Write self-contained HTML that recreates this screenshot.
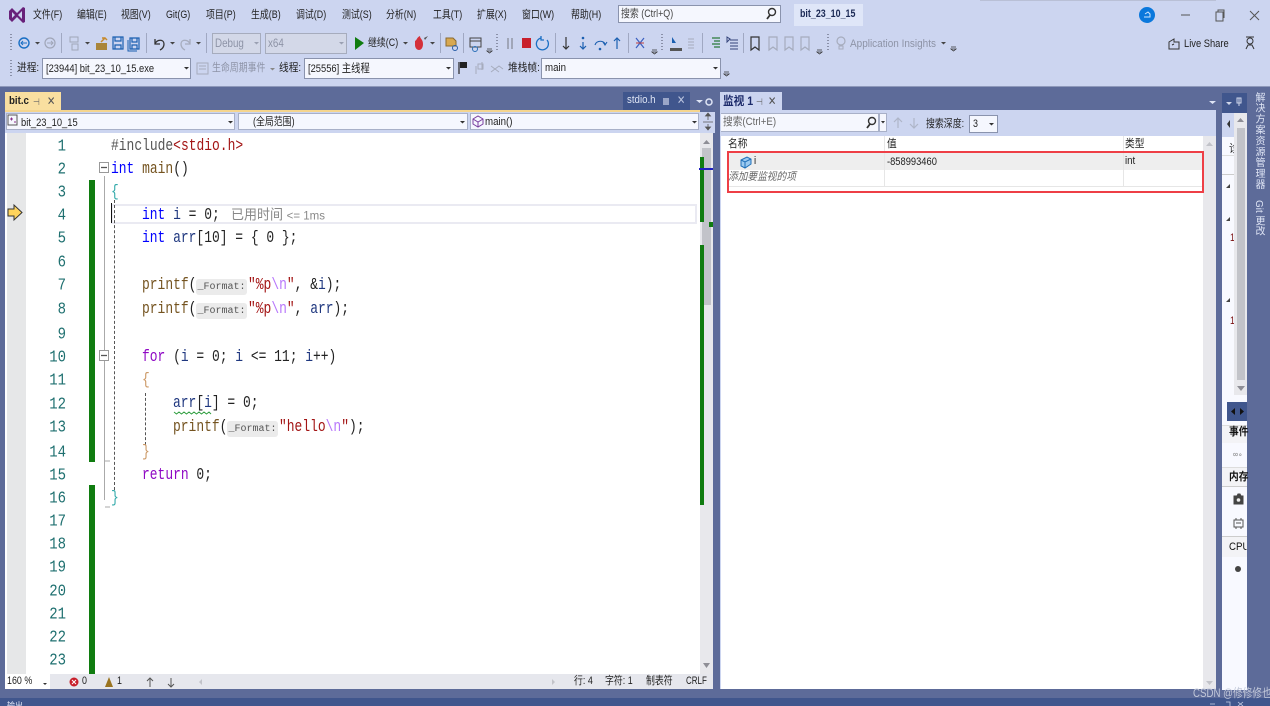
<!DOCTYPE html>
<html><head><meta charset="utf-8">
<style>
html,body{margin:0;padding:0;width:1270px;height:706px;overflow:hidden;background:#ccd5f0}
body{position:relative;font-family:"Liberation Sans","Noto Sans CJK SC",sans-serif;font-size:10px;color:#222}
#w{position:absolute;left:0;top:0;width:1270px;height:706px;filter:blur(.35px)}
.b,.t,.c,.n{position:absolute}
.t{white-space:nowrap;line-height:14px;transform:scale(.89,1.08);transform-origin:0 50%}
.w{transform:scale(.97,1.08)}
.c{white-space:pre;font-family:"Liberation Mono","Noto Serif CJK SC",monospace;font-size:16.2px;line-height:20px;height:20px;transform:scaleX(.8);transform-origin:0 0;color:#222}
.n{left:31px;width:35px;text-align:right;font-family:"Liberation Mono",monospace;font-size:14px;line-height:20px;color:#1f7070;transform:scaleY(1.2);transform-origin:50% 50%}
.k{color:#0000ff}.f{color:#74531f}.v{color:#1f377f}.s{color:#a31515}.e{color:#b776fb}.p{color:#8f08c4}
.h{position:absolute;background:#ebebeb;border-radius:3px;height:16px;font-family:"Liberation Mono",monospace;font-size:10px;line-height:18px;color:#555;text-align:center}
.cb{position:absolute;background:#f5f7fe;border:1px solid #8a93ad;box-sizing:border-box;height:21px}
.g{color:#8d93a6}
svg{position:absolute;left:0;top:0}
</style></head><body><div id="w">

<!-- chrome panels -->
<div class="b" style="left:980px;top:0;width:236px;height:1px;background:#b9c0d6"></div>
<div class="b" style="left:0;top:86px;width:1270px;height:620px;background:#5d6b99"></div>
<div class="b" style="left:0;top:86px;width:1270px;height:1px;background:#8e99bb"></div>
<div class="b" style="left:0;top:698px;width:1270px;height:8px;background:#40568d"></div>

<!-- menu -->
<span class="t" style="left:33px;top:9px">文件(F)</span>
<span class="t" style="left:77px;top:9px">编辑(E)</span>
<span class="t" style="left:121px;top:9px">视图(V)</span>
<span class="t" style="left:166px;top:9px">Git(G)</span>
<span class="t" style="left:206px;top:9px">项目(P)</span>
<span class="t" style="left:251px;top:9px">生成(B)</span>
<span class="t" style="left:296px;top:9px">调试(D)</span>
<span class="t" style="left:342px;top:9px">测试(S)</span>
<span class="t" style="left:386px;top:9px">分析(N)</span>
<span class="t" style="left:433px;top:9px">工具(T)</span>
<span class="t" style="left:477px;top:9px">扩展(X)</span>
<span class="t" style="left:522px;top:9px">窗口(W)</span>
<span class="t" style="left:571px;top:9px">帮助(H)</span>

<div class="b" style="left:618px;top:5px;width:163px;height:18px;background:#f5f7fe;border:1px solid #8a93ad;box-sizing:border-box"></div>
<span class="t" style="left:621px;top:8px;color:#444">搜索 (Ctrl+Q)</span>
<div class="b" style="left:794px;top:4px;width:69px;height:22px;background:#dfe6f8"></div>
<span class="t" style="left:800px;top:8px;color:#1c2a55;font-weight:bold;font-size:10px">bit_23_10_15</span>

<!-- toolbar 2 -->
<div class="cb" style="left:212px;top:33px;width:49px;background:#d3d8e8;border-color:#a6acbd"></div>
<span class="t g" style="left:215px;top:37px;font-size:11px">Debug</span>
<div class="cb" style="left:265px;top:33px;width:82px;background:#d3d8e8;border-color:#a6acbd"></div>
<span class="t g" style="left:268px;top:37px;font-size:11px">x64</span>
<span class="t" style="left:368px;top:37px">继续(C)</span>
<span class="t g" style="left:850px;top:37px;font-size:10.500px;transform:scale(.95,1.08)">Application Insights</span>
<span class="t" style="left:1184px;top:37px;font-size:10.500px">Live Share</span>

<!-- toolbar 3 -->
<span class="t w" style="left:17px;top:62px">进程:</span>
<div class="cb" style="left:42px;top:58px;width:149px"></div>
<span class="t" style="left:46px;top:62px;font-size:10.500px">[23944] bit_23_10_15.exe</span>
<span class="t g" style="left:212px;top:62px">生命周期事件</span>
<span class="t w" style="left:279px;top:62px">线程:</span>
<div class="cb" style="left:304px;top:58px;width:150px"></div>
<span class="t" style="left:308px;top:62px;font-size:10.500px">[25556] 主线程</span>
<span class="t w" style="left:508px;top:62px">堆栈帧:</span>
<div class="cb" style="left:541px;top:58px;width:180px"></div>
<span class="t w" style="left:545px;top:62px">main</span>

<!-- editor tabs -->
<div class="b" style="left:5px;top:92px;width:56px;height:18px;background:#f9dfa0"></div>
<div class="b" style="left:5px;top:110px;width:695px;height:2px;background:#f5d58e"></div>
<span class="t w" style="left:9px;top:95px;font-weight:bold;font-size:10px;color:#222">bit.c</span>
<span class="t" style="left:33px;top:95px;color:#666;font-size:9px">⊣</span>
<span class="t" style="left:47px;top:95px;color:#555;font-size:11px">✕</span>
<div class="b" style="left:623px;top:92px;width:67px;height:18px;background:#40568d"></div>
<span class="t w" style="left:627px;top:94px;color:#dfe5f5">stdio.h</span>
<span class="t" style="left:677px;top:94px;color:#b9c3de;font-size:11px">✕</span>

<!-- editor nav bar -->
<div class="b" style="left:5px;top:112px;width:710px;height:21px;background:#ccd5f0"></div>
<div class="b" style="left:6px;top:113px;width:229px;height:17px;background:#f5f7fe;border:1px solid #a8b0c8;box-sizing:border-box"></div>
<div class="b" style="left:238px;top:113px;width:230px;height:17px;background:#f5f7fe;border:1px solid #a8b0c8;box-sizing:border-box"></div>
<div class="b" style="left:470px;top:113px;width:229px;height:17px;background:#f5f7fe;border:1px solid #a8b0c8;box-sizing:border-box"></div>
<span class="t" style="left:21px;top:116px;font-size:10.500px">bit_23_10_15</span>
<span class="t" style="left:253px;top:116px">(全局范围)</span>
<span class="t w" style="left:485px;top:116px">main()</span>

<!-- editor -->
<div class="b" style="left:5px;top:133px;width:695px;height:541px;background:#fff"></div>
<div class="b" style="left:7px;top:133px;width:19px;height:541px;background:#e6e7e8"></div>
<div class="b" style="left:89px;top:180px;width:6px;height:282px;background:#107c10"></div>
<div class="b" style="left:89px;top:485px;width:6px;height:189px;background:#107c10"></div>
<div class="b" style="left:104px;top:176px;width:1px;height:324px;background:#aaa"></div>
<div class="b" style="left:111px;top:204px;width:586px;height:20px;border:2px solid #eaeaf2;box-sizing:border-box"></div>
<div class="b" style="left:111px;top:203px;width:1px;height:20px;background:#111"></div>
<div class="b" style="left:114px;top:200px;height:290px;border-left:1px dashed #555"></div>
<div class="b" style="left:145px;top:393px;height:52px;border-left:1px dashed #555"></div>

<div class="n" style="top:137px">1</div><div class="n" style="top:160px">2</div><div class="n" style="top:183px">3</div><div class="n" style="top:206px">4</div><div class="n" style="top:229px">5</div><div class="n" style="top:253px">6</div><div class="n" style="top:276px">7</div><div class="n" style="top:300px">8</div><div class="n" style="top:325px">9</div><div class="n" style="top:348px">10</div><div class="n" style="top:371px">11</div><div class="n" style="top:395px">12</div><div class="n" style="top:418px">13</div><div class="n" style="top:443px">14</div><div class="n" style="top:466px">15</div><div class="n" style="top:489px">16</div><div class="n" style="top:512px">17</div><div class="n" style="top:535px">18</div><div class="n" style="top:558px">19</div><div class="n" style="top:582px">20</div><div class="n" style="top:605px">21</div><div class="n" style="top:628px">22</div><div class="n" style="top:651px">23</div>

<div class="c" style="left:111px;top:136px"><span style="color:#555">#include</span><span class="s">&lt;stdio.h&gt;</span></div>
<div class="c" style="left:111px;top:159px"><span class="k">int</span> <span class="f">main</span>()</div>
<div class="c" style="left:111px;top:182px;color:#3aa">{</div>
<div class="c" style="left:142px;top:205px"><span class="k">int</span> <span class="v">i</span> = 0;</div>
<span class="t" style="left:231px;top:208px;color:#888;font-size:13px;transform:scale(1,1.08)">已用时间 <span style="font-size:11.500px">&lt;= 1ms</span></span>
<div class="c" style="left:142px;top:228px"><span class="k">int</span> <span class="v">arr</span>[10] = { 0 };</div>

<div class="c" style="left:142px;top:275px"><span class="f">printf</span>(</div>
<div class="h" style="left:196px;top:279px;width:51px">_Format:</div>
<div class="c" style="left:248px;top:275px"><span class="s">"%p</span><span class="e">\n</span><span class="s">"</span>, &amp;<span class="v">i</span>);</div>
<div class="c" style="left:142px;top:299px"><span class="f">printf</span>(</div>
<div class="h" style="left:196px;top:303px;width:51px">_Format:</div>
<div class="c" style="left:248px;top:299px"><span class="s">"%p</span><span class="e">\n</span><span class="s">"</span>, <span class="v">arr</span>);</div>

<div class="c" style="left:142px;top:347px"><span class="p">for</span> (<span class="v">i</span> = 0; <span class="v">i</span> &lt;= 11; <span class="v">i</span>++)</div>
<div class="c" style="left:142px;top:370px;color:#c96">{</div>
<div class="c" style="left:173px;top:393px"><span class="v">arr</span>[<span class="v">i</span>] = 0;</div>
<div class="c" style="left:173px;top:417px"><span class="f">printf</span>(</div>
<div class="h" style="left:227px;top:421px;width:51px">_Format:</div>
<div class="c" style="left:279px;top:417px"><span class="s">"hello</span><span class="e">\n</span><span class="s">"</span>);</div>
<div class="c" style="left:142px;top:442px;color:#c96">}</div>
<div class="c" style="left:142px;top:465px"><span class="p">return</span> 0;</div>
<div class="c" style="left:111px;top:488px;color:#3aa">}</div>

<!-- editor scrollbar -->
<div class="b" style="left:700px;top:133px;width:13px;height:541px;background:#e8e8ec"></div>
<div class="b" style="left:702px;top:148px;width:9px;height:157px;background:#c2c3c9"></div>
<div class="b" style="left:700px;top:157px;width:4px;height:65px;background:#107c10"></div>
<div class="b" style="left:700px;top:245px;width:4px;height:260px;background:#107c10"></div>
<div class="b" style="left:709px;top:222px;width:4px;height:5px;background:#107c10"></div>
<div class="b" style="left:699px;top:168px;width:14px;height:2px;background:#2020c0"></div>

<!-- status -->
<div class="b" style="left:5px;top:674px;width:708px;height:15px;background:#e6e7ed"></div>
<div class="b" style="left:5px;top:674px;width:45px;height:15px;background:#fff"></div>
<span class="t" style="left:7px;top:675px">160 %</span>
<span class="t" style="left:82px;top:675px">0</span>
<span class="t" style="left:117px;top:675px">1</span>
<span class="t" style="left:574px;top:675px">行: 4</span>
<span class="t" style="left:605px;top:675px">字符: 1</span>
<span class="t" style="left:646px;top:675px">制表符</span>
<span class="t" style="left:686px;top:675px;transform:scale(.8,1.08)">CRLF</span>
<span class="t" style="left:7px;top:699px;color:#dfe5f5;font-size:9px;height:7px;overflow:hidden">输出</span>

<!-- watch panel -->
<div class="b" style="left:720px;top:92px;width:62px;height:18px;background:#ccd5f0"></div>
<span class="t w" style="left:723px;top:95px;font-weight:bold;color:#1c2a6a;font-size:11px">监视 1</span>
<span class="t" style="left:756px;top:95px;color:#666;font-size:9px">⊣</span>
<span class="t" style="left:768px;top:95px;color:#555;font-size:11px">✕</span>
<div class="b" style="left:720px;top:110px;width:496px;height:26px;background:#ccd5f0"></div>
<div class="b" style="left:720px;top:113px;width:159px;height:19px;background:#f5f7fe;border:1px solid #a8b0c8;box-sizing:border-box"></div>
<div class="b" style="left:879px;top:113px;width:8px;height:19px;background:#f5f7fe;border:1px solid #a8b0c8;box-sizing:border-box"></div>
<span class="t w" style="left:723px;top:116px;color:#666">搜索(Ctrl+E)</span>
<span class="t" style="left:926px;top:118px">搜索深度:</span>
<div class="b" style="left:969px;top:115px;width:29px;height:18px;background:#f5f7fe;border:1px solid #8a93ad;box-sizing:border-box"></div>
<span class="t" style="left:973px;top:118px">3</span>

<div class="b" style="left:720px;top:136px;width:483px;height:553px;background:#fff"></div>
<div class="b" style="left:1203px;top:136px;width:13px;height:553px;background:#e8e8ec"></div>
<div class="b" style="left:720px;top:110px;width:1px;height:579px;background:#ccd5f0"></div>
<div class="b" style="left:727px;top:153px;width:476px;height:17px;background:#eeeeee"></div>
<div class="b" style="left:727px;top:186px;width:476px;height:1px;background:#e6e6e6"></div>
<div class="b" style="left:884px;top:136px;width:1px;height:50px;background:#e6e6e6"></div>
<div class="b" style="left:1123px;top:136px;width:1px;height:50px;background:#e6e6e6"></div>
<span class="t w" style="left:728px;top:138px">名称</span>
<span class="t w" style="left:887px;top:138px">值</span>
<span class="t w" style="left:1125px;top:138px">类型</span>
<span class="t w" style="left:754px;top:155px">i</span>
<span class="t" style="left:887px;top:155px;font-size:10.500px">-858993460</span>
<span class="t w" style="left:1125px;top:155px">int</span>
<span class="t w" style="left:728px;top:171px;font-style:italic;color:#666">添加要监视的项</span>
<div class="b" style="left:727px;top:151px;width:477px;height:42px;border:2px solid #ee3f46;box-sizing:border-box"></div>

<!-- right side panel -->
<div class="b" style="left:1222px;top:93px;width:25px;height:597px;background:#f8f9ff"></div>
<div class="b" style="left:1222px;top:93px;width:25px;height:20px;background:#40568d"></div>
<div class="b" style="left:1222px;top:113px;width:25px;height:24px;background:#ccd5f0"></div>
<div class="b" style="left:1222px;top:155px;width:12px;height:1px;background:#ddd"></div>
<div class="b" style="left:1222px;top:174px;width:12px;height:1px;background:#ccc"></div>
<span class="t w" style="left:1229px;top:143px;color:#222;width:5px;overflow:hidden">诊</span>
<span class="t" style="left:1230px;top:232px;color:#7a1010">1</span>
<span class="t" style="left:1230px;top:315px;color:#7a1010">1</span>
<div class="b" style="left:1234px;top:113px;width:13px;height:282px;background:#e8e8ec"></div>
<div class="b" style="left:1237px;top:128px;width:8px;height:252px;background:#c2c3c9"></div>
<div class="b" style="left:1227px;top:402px;width:20px;height:19px;background:#40568d"></div>
<div class="b" style="left:1222px;top:425px;width:25px;height:17px;background:#f3f3f6;border-top:1px solid #ddd"></div>
<span class="t w" style="left:1229px;top:426px;color:#111;font-weight:bold">事件</span>
<span class="t" style="left:1233px;top:448px;color:#777;font-size:8px">∞∘</span>
<div class="b" style="left:1222px;top:467px;width:25px;height:20px;background:#f3f3f6;border-top:1px solid #ddd;border-bottom:1px solid #ccc;box-sizing:border-box"></div>
<span class="t w" style="left:1229px;top:471px;font-weight:bold;color:#111">内存</span>
<div class="b" style="left:1222px;top:536px;width:25px;height:21px;background:#f3f3f6;border-top:1px solid #ccc;box-sizing:border-box"></div>
<span class="t w" style="left:1229px;top:541px;color:#111;width:18px;overflow:hidden">CPU</span>

<!-- vertical tabs -->
<div class="t" style="left:1252px;top:92px;writing-mode:vertical-rl;color:#dfe5f5;line-height:12px;letter-spacing:.9px;transform:none">解决方案资源管理器</div>
<div class="t" style="left:1252px;top:200px;writing-mode:vertical-rl;color:#dfe5f5;line-height:12px;transform:none">Git 更改</div>

<!-- watermark -->
<span class="t" style="left:1193px;top:687px;color:#c3c9da;font-size:11px;transform:scale(.88,1.08)">CSDN @修修修也</span>

<svg width="1270" height="706" viewBox="0 0 1270 706" fill="none">
 <!-- VS logo -->
 <path d="M9 11l3-3 5 5 6-6 2 1v14l-2 1-6-6-5 5-3-3zM12 12v6l3-3zM22 11l-4 4 4 4z" fill="#68217a" fill-rule="evenodd"/>
 <!-- search icons -->
 <circle cx="772" cy="12" r="3.500" stroke="#333" stroke-width="1.400"/><path d="M770 15l-3 4" stroke="#333" stroke-width="1.800"/>
 <circle cx="872" cy="121" r="3.500" stroke="#333" stroke-width="1.400"/><path d="M870 124l-3 4" stroke="#333" stroke-width="1.800"/>
 <!-- account + window -->
 <circle cx="1147" cy="15" r="8" fill="#0a78dc"/><path d="M1144 17h6v-3l-2-2-3 2" stroke="#cfe6ff"/>
 <path d="M1181 15h9" stroke="#555"/>
 <path d="M1216 12h7v9h-7zM1218 12v-2h6v8" stroke="#555"/>
 <path d="M1250 11l9 9M1259 11l-9 9" stroke="#555"/>
 <!-- grips -->
 <g stroke="#8a90a8" stroke-dasharray="1 2" stroke-width="2">
  <path d="M11 34v18M11 60v18M497 34v18M662 34v18M828 34v18"/>
 </g>
 <!-- separators -->
 <path d="M61.500 33v20M146.500 33v20M206.500 33v20M440.500 33v20M463.500 33v20M555.500 33v20M628.500 33v20M702.500 33v20M743.500 33v20" stroke="#a0a8c2"/>
 <!-- toolbar icons -->
 <circle cx="24" cy="43" r="5" stroke="#1a6fc4" stroke-width="1.400"/><path d="M27 43h-6M23 41l-2 2 2 2" stroke="#1a6fc4"/>
 <circle cx="50" cy="43" r="5" stroke="#a0a6b8" stroke-width="1.200"/><path d="M47 43h6M51 41l2 2-2 2" stroke="#a0a6b8"/>
 <path d="M70 37h8v5h-8zM72 44h6v6h-6z" stroke="#a0a6b8"/>
 <path d="M96 43h11v7H96z" fill="#a9853a"/><path d="M101 42l4-4 2 2M105 38h-3" stroke="#c78a2c" stroke-width="1.500"/>
 <path d="M113 37h10v12h-10zM115 37v4h6v-4M115 49v-4h6v4" stroke="#1a5fb0" stroke-width="1.200"/>
 <path d="M130 38h9v11h-9zM132 38v4h5v-4M132 49v-4h5v4" stroke="#1a5fb0" stroke-width="1.200"/><path d="M128 40v11h9" stroke="#1a5fb0"/>
 <path d="M155 39v5h5M155 44c2-5 9-5 9 0 0 3-2 5-4 6" stroke="#333" stroke-width="1.300"/>
 <path d="M190 39v5h-5M190 44c-2-5-9-5-9 0 0 3 2 5 4 6" stroke="#a6acbd" stroke-width="1.300"/>
 <path d="M35 42h5l-2.500 2.500zM85 42h5l-2.500 2.500zM170 42h5l-2.500 2.500zM196 42h5l-2.500 2.500zM403 42h5l-2.500 2.500zM430 42h5l-2.500 2.500zM941 42h5l-2.500 2.500z" fill="#444"/>
 <path d="M254 42h5l-2.500 2.500zM339 42h5l-2.500 2.500z" fill="#9aa0b2"/>
 <path d="M355 37l9 6-9 7z" fill="#107c10"/>
 <path d="M415 41c2-1 2-4 5-5 0 3 3 3 3 8 0 4-2 6-4 6s-4-2-4-5z" fill="#d4303a"/><path d="M424 38l4-2-3 4z" fill="#555"/>
 <path d="M446 38h7l3 3v5h-10z" fill="#d8a850" stroke="#8a6a30"/><circle cx="455" cy="48" r="2.500" stroke="#2a5fa8"/>
 <path d="M470 38h11v9h-11zM470 41h11" stroke="#444"/><circle cx="475" cy="49" r="2.500" stroke="#2a6fb8"/>
 <path d="M487 49h5M487 51h5l-2.500 2z" stroke="#333" stroke-width=".8"/>
 <path d="M507 38h2v11h-2zM511 38h2v11h-2z" fill="#a0a6b8"/>
 <rect x="522" y="38" width="9" height="10" fill="#c8202c"/>
 <path d="M541 38a6 6 0 1 0 6 2M541 36v4h3" stroke="#1a6fc4" stroke-width="1.300"/>
 <path d="M566 37v12M563 46l3 3 3-3" stroke="#333" stroke-width="1.200"/>
 <path d="M583 42v7M580 46l3 3 3-3" stroke="#1a5fb0" stroke-width="1.200"/><circle cx="583" cy="38" r="1.300" fill="#1a5fb0"/>
 <path d="M595 45c1-5 10-5 10 0M603 42l2 3 2-3" stroke="#1a5fb0" stroke-width="1.100"/><circle cx="600" cy="49" r="1.300" fill="#1a5fb0"/>
 <path d="M617 49v-11M614 41l3-3 3 3" stroke="#1a5fb0" stroke-width="1.200"/>
 <path d="M636 38l8 10M644 38l-8 10" stroke="#3a5fc0" stroke-width="1.200"/><path d="M636 43h8" stroke="#c04040"/>
 <path d="M652 50h5M652 52h5l-2.500 2z" stroke="#333" stroke-width=".8"/>
 <path d="M672 37l4 6h-4z" fill="#1a5fb0"/><path d="M670 48h12v3h-12z" fill="#555"/>
 <path d="M688 39h6M688 42h6M688 45h6M688 48h6" stroke="#a6acbd"/>
 <path d="M712 38h8M714 41h6M712 44h8M714 47h6" stroke="#2a7a3a" stroke-width="1.200"/>
 <path d="M727 37l3 2-3 3zM730 40h8M730 43h8M730 46h8M730 49h8" stroke="#33437a"/>
 <path d="M751 37h8v13l-4-3-4 3z" stroke="#333" stroke-width="1.200"/>
 <path d="M769 37h8v13l-4-3-4 3zM785 37h8v13l-4-3-4 3zM801 37h8v13l-4-3-4 3z" stroke="#a6acbd" stroke-width="1.200"/>
 <path d="M817 50h5M817 52h5l-2.500 2zM951 47h5M951 49h5l-2.500 2zM724 72h5M724 74h5l-2.500 2z" stroke="#333" stroke-width=".8"/>
 <circle cx="841" cy="41" r="4" stroke="#a6acbd" stroke-width="1.200"/><path d="M839 46h4v3h-4z" stroke="#a6acbd"/>
 <path d="M1169 49v-7l5-3v3h5v7zM1172 45l2-1" stroke="#333"/>
 <circle cx="1250" cy="41" r="3" stroke="#333"/><path d="M1246 37h8M1246 49l2-4h4l2 4" stroke="#333"/>
 <!-- toolbar 3 icons -->
 <path d="M197 63h11v11h-11zM199 66h7M199 69h7" stroke="#a6acbd"/>
 <path d="M270 68h5l-2.500 2.500z" fill="#888"/>
 <path d="M459 62v12" stroke="#222" stroke-width="1.200"/><path d="M460 62h7v6h-7z" fill="#222"/>
 <path d="M476 66v8M482 62v8M478 64h5v5h-5z" stroke="#a6acbd"/>
 <path d="M491 66l4 3 4-3 4 3M491 72l4-3 4 3" stroke="#a6acbd"/>
 <path d="M184 67h5l-2.500 2.500zM446 67h5l-2.500 2.500zM713 67h5l-2.500 2.500z" fill="#333"/>
 <!-- tab row icons -->
 <path d="M696 100h7l-3.500 3z" fill="#dfe5f5"/><circle cx="709" cy="102" r="3" stroke="#dfe5f5" stroke-width="1.500"/>
 <path d="M1209 101h7l-3.500 3z" fill="#dfe5f5"/>
 <path d="M1226 102h6l-3 3z" fill="#cfd6ea"/><path d="M1239 98v8M1237 98h4v5h-4z" stroke="#cfd6ea"/>
 <path d="M663 98h6v7h-6z" fill="#9aa6c8"/>
 <!-- nav bar -->
 <path d="M8 115h9v10H8z" stroke="#555"/><path d="M10 119h3M11.500 117.500v3M14 122h2" stroke="#8a2d8a"/>
 <path d="M473 119l5-3 5 3v5l-5 3-5-3zM473 119l5 3 5-3M478 122v5" stroke="#7a3fa0"/>
 <path d="M228 121h5l-2.500 2.500zM460 121h5l-2.500 2.500zM692 121h5l-2.500 2.500zM881 121h4l-2 2.500zM989 123h5l-2.500 2.500zM43 683h4l-2 2z" fill="#333"/>
 <path d="M703 122h10M708 113l-2.500 3h5zM708 130l-2.500-3h5zM708 116v4M708 124v3" stroke="#555" fill="#555" stroke-width=".8"/>
 <!-- scroll arrows -->
 <path d="M703 144l3.500-4 3.500 4zM703 663h7l-3.500 5z" fill="#8e8e96"/>
 <path d="M1206 146l3.500-4 3.500 4z" fill="#c2c3c9"/>
 <path d="M1206 681h7l-3.500 4z" fill="#c2c3c9"/>
 <path d="M1237 122l3.500-4 3.500 4zM1237 386h8l-4 5z" fill="#8e8e96"/>
 <!-- watch toolbar arrows -->
 <path d="M898 128v-10M894 122l4-4 4 4M914 118v10M910 124l4 4 4-4" stroke="#aeb5c8" stroke-width="1.200"/>
 <!-- exec arrow -->
 <path d="M8 209h6v-4l8 7.500-8 7.500v-4H8z" fill="#ffd45c" stroke="#333" stroke-width="1"/>
 <!-- fold boxes -->
 <rect x="99.500" y="162.500" width="9" height="10" fill="#fff" stroke="#999"/><path d="M101 167.500h6" stroke="#555" stroke-width="1.300"/>
 <rect x="99.500" y="350.500" width="9" height="10" fill="#fff" stroke="#999"/><path d="M101 355.500h6" stroke="#555" stroke-width="1.300"/>
 <path d="M105 461h5M105 507h5" stroke="#aaa"/>
 <!-- squiggle -->
 <path d="M174 412l2.500 2 2.500-2 2.500 2 2.500-2 2.500 2 2.500-2 2.500 2 2.500-2 2.500 2 2.500-2 2.500 2 2.500-2 2.500 2 2.500-2 2 2" stroke="#2e9e3e"/>
 <!-- status icons -->
 <circle cx="74" cy="682" r="4.500" fill="#c8202c"/><path d="M72 680l4 4M76 680l-4 4" stroke="#fff"/>
 <path d="M109 677l4 10h-8z" fill="#9a7420"/>
 <path d="M150 687v-9M147 681l3-3 3 3M171 678v9M168 684l3 3 3-3" stroke="#555"/>
 <path d="M199 682l3-3v6zM552 679l3 3-3 3z" fill="#c2c3c9"/>
 <!-- watch item icon -->
 <path d="M741 160l6-3 4 2v5l-6 4-4-2z" fill="#9ccaf0" stroke="#1e6fb8"/><path d="M741 160l4 2 6-3M745 162v6" stroke="#1e6fb8"/>
 <!-- right panel icons -->
 <path d="M1230 120v8l-3-4z" fill="#333"/>
 <path d="M1230 184v4h-4zM1230 217v4h-4zM1230 298v4h-4z" fill="#444"/>
 <path d="M1235 408v7l-4-3.500zM1240 408v7l4-3.500z" fill="#111"/>
 <path d="M1234 496h9v8h-9zM1237 496l1-2h2l1 2" fill="#444" stroke="#444"/><circle cx="1238.500" cy="500" r="1.800" fill="#eee"/>
 <path d="M1234 520h9v7h-9zM1236 523h5M1236 518v2M1241 518v2M1236 527v2M1241 527v2" stroke="#555"/>
 <circle cx="1238" cy="569" r="3" fill="#444"/>
 <!-- bottom right window buttons -->
 <path d="M1210 704h5M1226 702h4v4M1238 702l5 4M1243 702l-5 4" stroke="#c8d0e6" stroke-width=".8"/>
</svg>
</div></body></html>
